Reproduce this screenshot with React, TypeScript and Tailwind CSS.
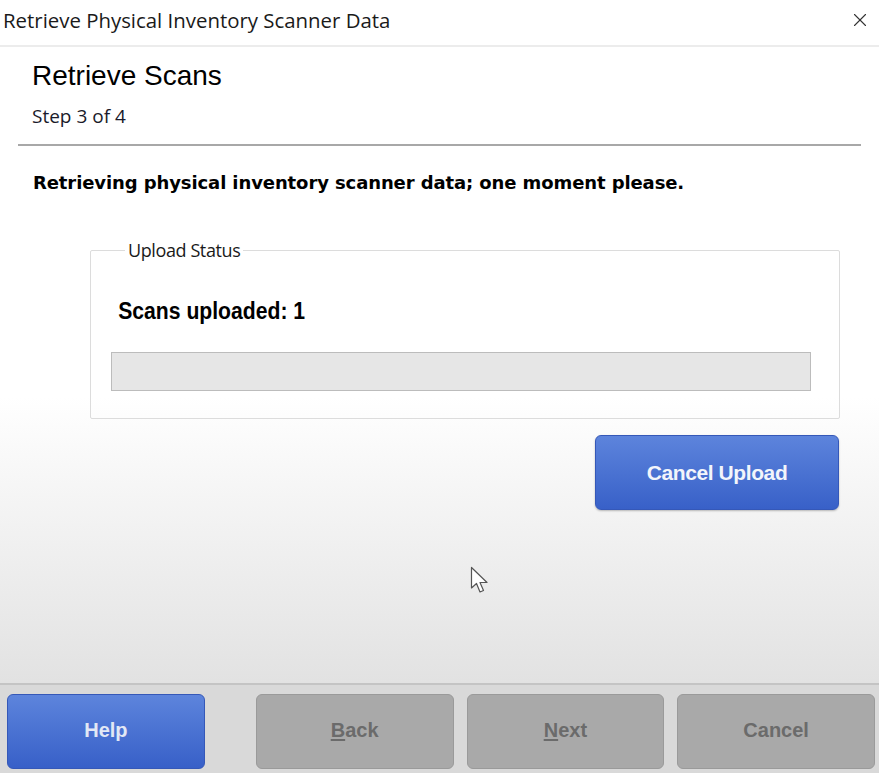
import { X } from "lucide-react";

const footerButtons = [
  { label: "Help", key: "", enabled: true },
  { label: "Back", key: "B", enabled: false },
  { label: "Next", key: "N", enabled: false },
  { label: "Cancel", key: "", enabled: false },
];

function ButtonLabel({ label, accel }: { label: string; accel: string }) {
  if (!accel) return <>{label}</>;
  return (
    <>
      <span className="underline underline-offset-2">{accel}</span>
      {label.slice(1)}
    </>
  );
}

export default function App() {
  return (
    <div className="w-[879px] h-[773px] flex flex-col bg-white overflow-hidden select-none">
      {/* window title bar */}
      <div className="h-[47px] flex items-center justify-between pl-[3px] pr-[8px] pb-[5px] border-b-2 border-[#ececec] font-['Open_Sans',sans-serif]">
        <span className="text-[20.4px] text-[#1a1a1a]">Retrieve Physical Inventory Scanner Data</span>
        <X size={22} strokeWidth={1.2} className="text-[#333]" />
      </div>

      {/* wizard body */}
      <div className="flex-1 flex flex-col bg-gradient-to-b from-white from-55% to-[#e2e2e2] font-['DejaVu_Sans',sans-serif]">
        <div className="pl-[32px] pt-[13px] pb-[16px]">
          <h1 className="text-[28px] leading-[32px] text-black font-['Liberation_Sans',sans-serif]">Retrieve Scans</h1>
          <p className="mt-[12px] text-[19px] leading-[24px] text-[#1a1a2a] font-['Open_Sans',sans-serif]">Step 3 of 4</p>
        </div>
        <div className="mx-[18px] h-[2px] bg-[#a8a8a8]" />

        <p className="pl-[33px] pt-[25px] text-[18px] leading-[24px] font-bold text-black tracking-[-0.1px]">
          Retrieving physical inventory scanner data; one moment please.
        </p>

        {/* upload status group box */}
        <fieldset className="ml-[90px] mr-[39px] mt-[44px] h-[180px] border border-[#dcdcdc] rounded-[2px] pl-[20px] pr-[28px] pt-[36px]">
          <legend className="ml-[14px] px-[3px] text-[18px] leading-[22px] text-[#1a1a1a] font-['Open_Sans',sans-serif] tracking-[-0.4px]">
            Upload Status
          </legend>
          <p className="pl-[8px] text-[23.5px] leading-[28px] font-bold text-black font-['Liberation_Sans',sans-serif] scale-x-[0.9] origin-left">
            Scans uploaded: 1
          </p>
          <div className="mt-[27px] h-[39px] bg-[#e6e6e6] border border-[#bcbcbc]" />
        </fieldset>

        <div className="flex justify-end pr-[40px] pt-[16px]">
          <button className="w-[244px] h-[75px] rounded-[6px] border border-[#3558b8] bg-gradient-to-b from-[#5d84dc] to-[#3860c8] text-[#f2f5fb] text-[21px] font-bold font-['Liberation_Sans',sans-serif] tracking-[-0.4px] shadow-[0_1px_2px_rgba(0,0,0,0.25)]">
            Cancel Upload
          </button>
        </div>

        {/* mouse pointer */}
        <div className="relative flex-1">
          <svg className="absolute left-[470px] top-[56px]" width="20" height="30" viewBox="0 0 20 30">
            <path
              d="M1.5 1.5 L1.5 22 L6.5 17.5 L10 26 L13.5 24.5 L10 16.5 L17 16.5 Z"
              fill="white"
              stroke="#555"
              strokeWidth="1.2"
              strokeLinejoin="round"
            />
          </svg>
        </div>
      </div>

      {/* footer button bar */}
      <div className="h-[90px] bg-[#d9d9d9] border-t-2 border-[#c4c4c4] flex items-start gap-[13px] pl-[7px] pr-[4px] pt-[9px] font-['Liberation_Sans',sans-serif]">
        {footerButtons.map((b, i) => (
          <button
            key={b.label}
            className={
              b.enabled
                ? "w-[198px] h-[75px] pb-[3px] rounded-[6px] border border-[#3558b8] bg-gradient-to-b from-[#5d84dc] to-[#3860c8] text-[#e2e8f5] text-[20px] font-bold"
                : "w-[198px] h-[75px] pb-[3px] rounded-[6px] border border-[#9a9a9a] bg-[#a9a9a9] text-[#6b6b6b] text-[20px] font-bold" +
                  (i === 1 ? " ml-[38px]" : "")
            }
          >
            <ButtonLabel label={b.label} accel={b.key} />
          </button>
        ))}
      </div>
    </div>
  );
}
